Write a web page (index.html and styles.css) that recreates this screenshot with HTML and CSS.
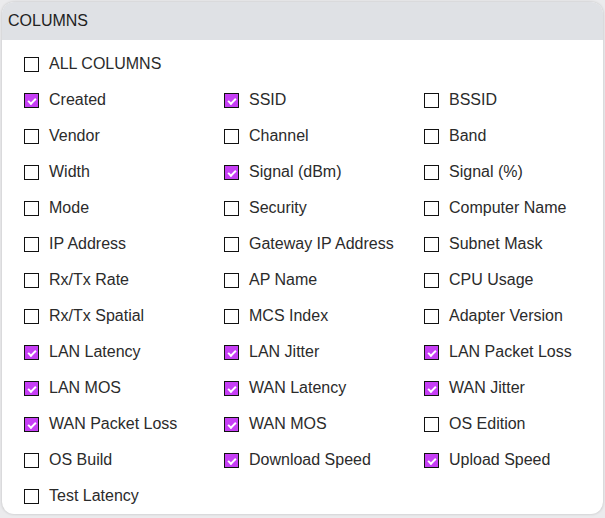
FILE: index.html
```html
<!DOCTYPE html>
<html>
<head>
<meta charset="utf-8">
<link rel="stylesheet" href="styles.css">
</head>
<body>
<div class="backdrop">
  <div class="panel">
    <div class="header">COLUMNS</div>
    <div class="body">
      <label class="item all"><span class="box"></span>ALL COLUMNS</label>
      <div class="grid">
        <label class="item"><span class="box on"></span>Created</label>
        <label class="item"><span class="box on"></span>SSID</label>
        <label class="item"><span class="box"></span>BSSID</label>
        <label class="item"><span class="box"></span>Vendor</label>
        <label class="item"><span class="box"></span>Channel</label>
        <label class="item"><span class="box"></span>Band</label>
        <label class="item"><span class="box"></span>Width</label>
        <label class="item"><span class="box on"></span>Signal (dBm)</label>
        <label class="item"><span class="box"></span>Signal (%)</label>
        <label class="item"><span class="box"></span>Mode</label>
        <label class="item"><span class="box"></span>Security</label>
        <label class="item"><span class="box"></span>Computer Name</label>
        <label class="item"><span class="box"></span>IP Address</label>
        <label class="item"><span class="box"></span>Gateway IP Address</label>
        <label class="item"><span class="box"></span>Subnet Mask</label>
        <label class="item"><span class="box"></span>Rx/Tx Rate</label>
        <label class="item"><span class="box"></span>AP Name</label>
        <label class="item"><span class="box"></span>CPU Usage</label>
        <label class="item"><span class="box"></span>Rx/Tx Spatial</label>
        <label class="item"><span class="box"></span>MCS Index</label>
        <label class="item"><span class="box"></span>Adapter Version</label>
        <label class="item"><span class="box on"></span>LAN Latency</label>
        <label class="item"><span class="box on"></span>LAN Jitter</label>
        <label class="item"><span class="box on"></span>LAN Packet Loss</label>
        <label class="item"><span class="box on"></span>LAN MOS</label>
        <label class="item"><span class="box on"></span>WAN Latency</label>
        <label class="item"><span class="box on"></span>WAN Jitter</label>
        <label class="item"><span class="box on"></span>WAN Packet Loss</label>
        <label class="item"><span class="box on"></span>WAN MOS</label>
        <label class="item"><span class="box"></span>OS Edition</label>
        <label class="item"><span class="box"></span>OS Build</label>
        <label class="item"><span class="box on"></span>Download Speed</label>
        <label class="item"><span class="box on"></span>Upload Speed</label>
        <label class="item"><span class="box"></span>Test Latency</label>
      </div>
    </div>
  </div>
</div>
</body>
</html>
```
FILE: styles.css
```css
html, body {
  margin: 0;
  padding: 0;
}
body {
  width: 605px;
  height: 518px;
  overflow: hidden;
  background: #ebebed;
  font-family: "Liberation Sans", Arial, sans-serif;
}
.backdrop {
  padding: 2px 2px 0 2px;
}
.panel {
  width: 601px;
  height: 512px;
  background: #ffffff;
  border-radius: 12px;
  overflow: hidden;
  box-shadow: 0 0 3px rgba(0, 0, 0, 0.2);
}
.header {
  height: 38px;
  box-sizing: border-box;
  padding: 10px 0 0 6px;
  background: #dfe1e5;
  color: #222;
  font-size: 16px;
  line-height: 18px;
}
.body {
  padding: 6px 0 0 22px;
}
.grid {
  display: grid;
  grid-template-columns: 200px 200px 200px;
}
.item {
  display: flex;
  align-items: center;
  height: 36px;
  font-size: 16px;
  color: #2b2b2b;
}
.box {
  width: 15px;
  height: 15px;
  box-sizing: border-box;
  border: 1px solid #111;
  margin-right: 10px;
  flex: none;
  position: relative;
  background: #fff;
}
.box.on {
  background: #c63ff5;
}
.box.on::after {
  content: "";
  position: absolute;
  left: 3px;
  top: 4px;
  width: 6px;
  height: 3px;
  border-left: 2px solid #fff;
  border-bottom: 2px solid #fff;
  transform: rotate(-45deg);
}
```
